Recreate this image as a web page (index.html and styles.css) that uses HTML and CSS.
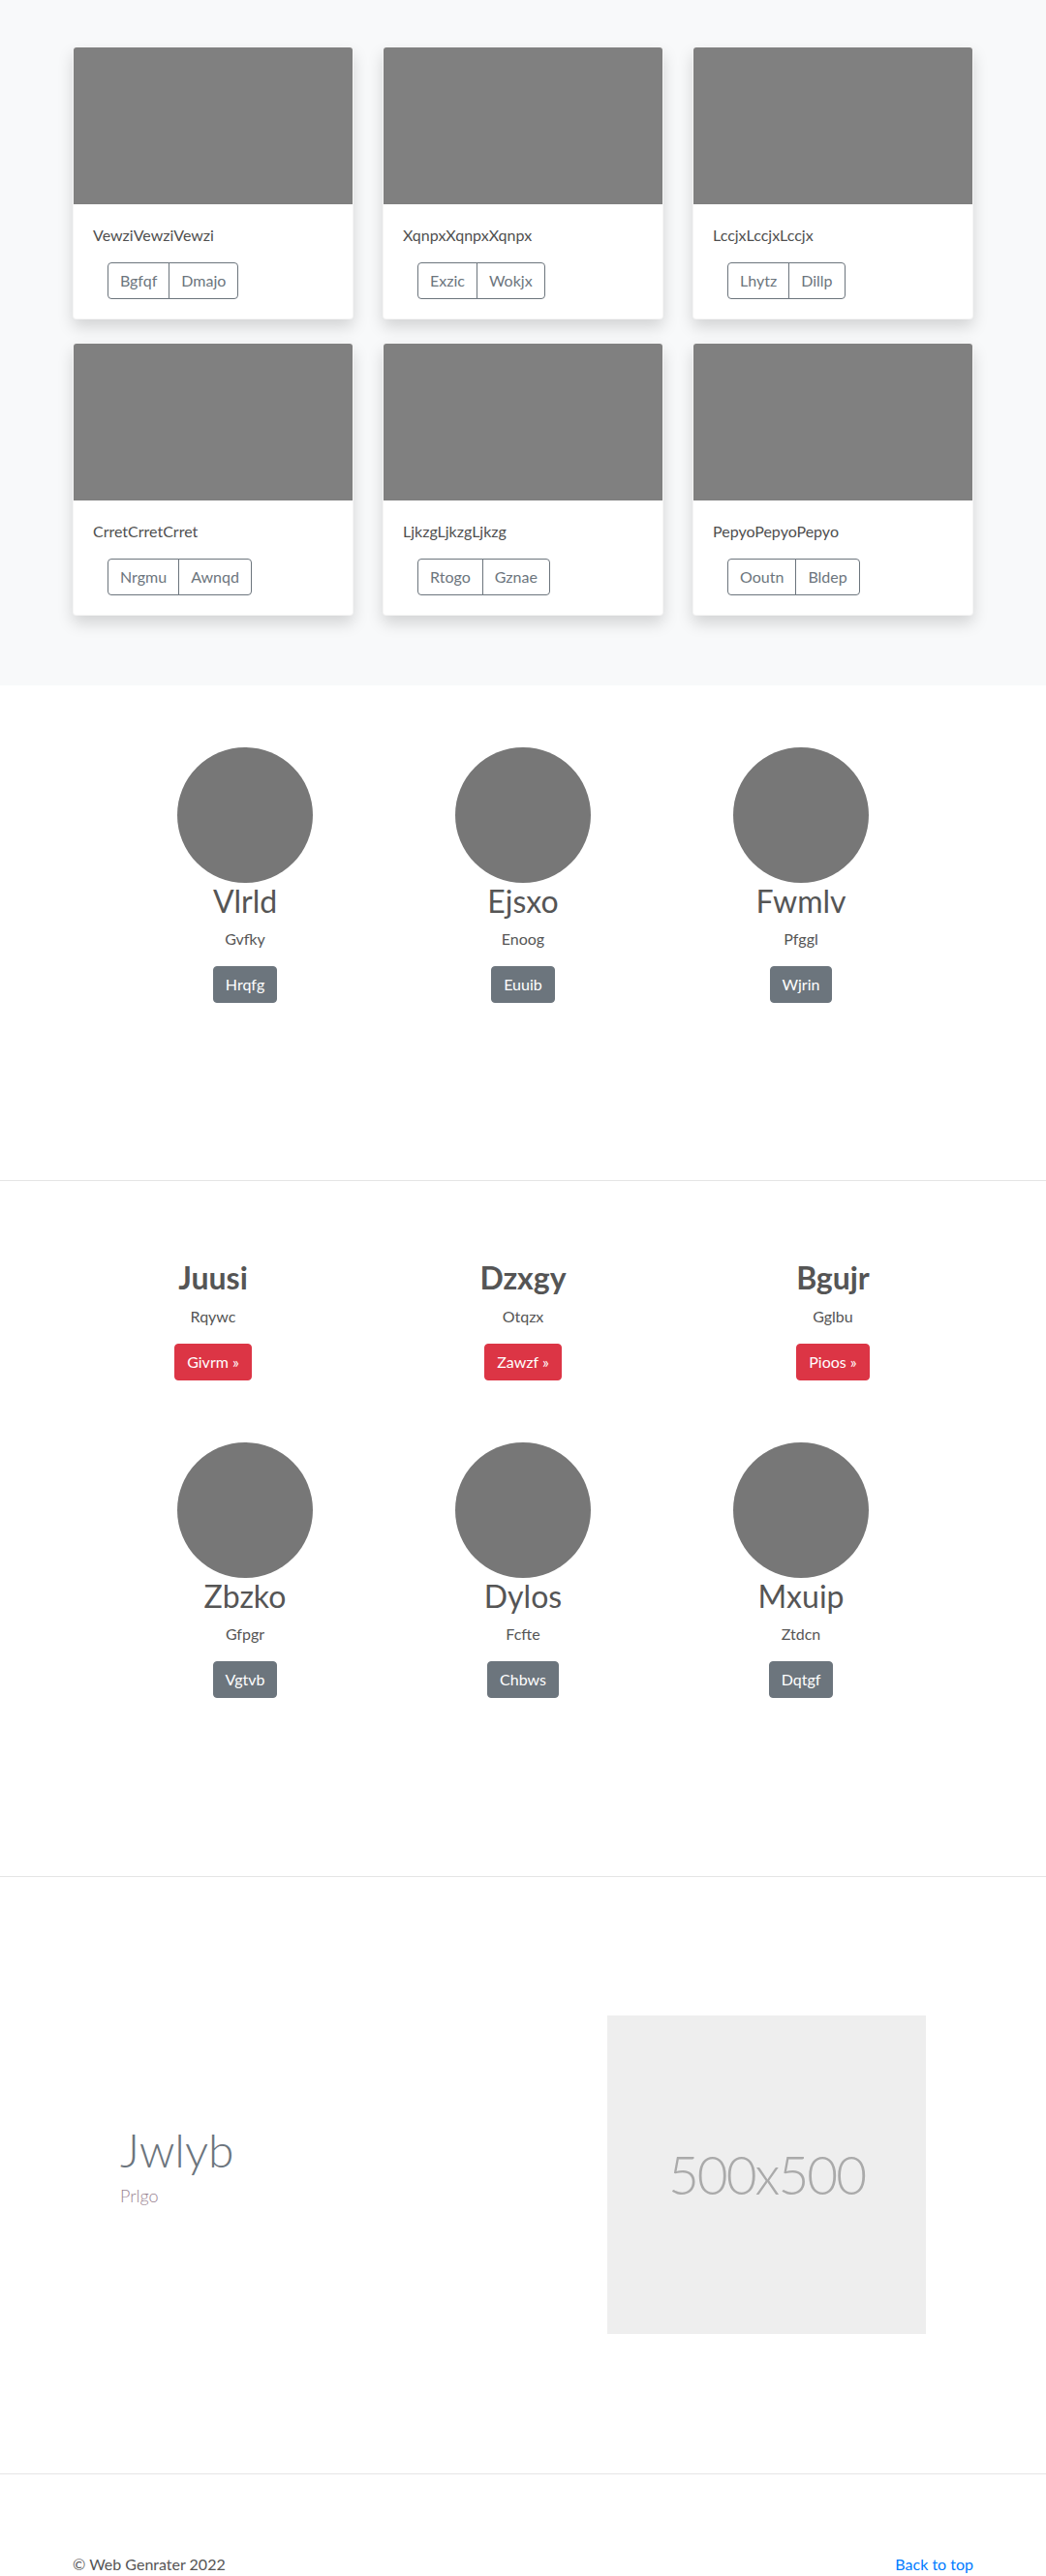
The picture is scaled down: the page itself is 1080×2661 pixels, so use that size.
FILE: index.html
```html
<!DOCTYPE html>
<html lang="en">
<head>
<meta charset="utf-8">
<title>Album</title>
<link rel="stylesheet" href="styles.css">
</head>
<body>
<main>
  <section class="album">
    <div class="container album-grid">
      <div class="card">
        <div class="card-img"></div>
        <div class="card-body">
          <p class="card-text">VewziVewziVewzi</p>
          <div class="btn-group"><a class="btn-outline">Bgfqf</a><a class="btn-outline">Dmajo</a></div>
        </div>
      </div>
      <div class="card">
        <div class="card-img"></div>
        <div class="card-body">
          <p class="card-text">XqnpxXqnpxXqnpx</p>
          <div class="btn-group"><a class="btn-outline">Exzic</a><a class="btn-outline">Wokjx</a></div>
        </div>
      </div>
      <div class="card">
        <div class="card-img"></div>
        <div class="card-body">
          <p class="card-text">LccjxLccjxLccjx</p>
          <div class="btn-group"><a class="btn-outline">Lhytz</a><a class="btn-outline">Dillp</a></div>
        </div>
      </div>
      <div class="card">
        <div class="card-img"></div>
        <div class="card-body">
          <p class="card-text">CrretCrretCrret</p>
          <div class="btn-group"><a class="btn-outline">Nrgmu</a><a class="btn-outline">Awnqd</a></div>
        </div>
      </div>
      <div class="card">
        <div class="card-img"></div>
        <div class="card-body">
          <p class="card-text">LjkzgLjkzgLjkzg</p>
          <div class="btn-group"><a class="btn-outline">Rtogo</a><a class="btn-outline">Gznae</a></div>
        </div>
      </div>
      <div class="card">
        <div class="card-img"></div>
        <div class="card-body">
          <p class="card-text">PepyoPepyoPepyo</p>
          <div class="btn-group"><a class="btn-outline">Ooutn</a><a class="btn-outline">Bldep</a></div>
        </div>
      </div>
    </div>
  </section>

  <section class="team">
    <div class="people">
      <div class="person">
        <div class="avatar"></div>
        <h2 class="person-name">Vlrld</h2>
        <p class="person-role">Gvfky</p>
        <p class="person-action"><a class="btn btn-secondary">Hrqfg</a></p>
      </div>
      <div class="person">
        <div class="avatar"></div>
        <h2 class="person-name">Ejsxo</h2>
        <p class="person-role">Enoog</p>
        <p class="person-action"><a class="btn btn-secondary">Euuib</a></p>
      </div>
      <div class="person">
        <div class="avatar"></div>
        <h2 class="person-name">Fwmlv</h2>
        <p class="person-role">Pfggl</p>
        <p class="person-action"><a class="btn btn-secondary">Wjrin</a></p>
      </div>
    </div>
  </section>

  <hr class="divider">

  <section class="features">
    <div class="feature-row">
      <div class="feature">
        <h2 class="feature-title">Juusi</h2>
        <p class="person-role">Rqywc</p>
        <p class="person-action"><a class="btn btn-danger">Givrm &raquo;</a></p>
      </div>
      <div class="feature">
        <h2 class="feature-title">Dzxgy</h2>
        <p class="person-role">Otqzx</p>
        <p class="person-action"><a class="btn btn-danger">Zawzf &raquo;</a></p>
      </div>
      <div class="feature">
        <h2 class="feature-title">Bgujr</h2>
        <p class="person-role">Gglbu</p>
        <p class="person-action"><a class="btn btn-danger">Pioos &raquo;</a></p>
      </div>
    </div>
    <div class="people people-second">
      <div class="person">
        <div class="avatar"></div>
        <h2 class="person-name">Zbzko</h2>
        <p class="person-role">Gfpgr</p>
        <p class="person-action"><a class="btn btn-secondary">Vgtvb</a></p>
      </div>
      <div class="person">
        <div class="avatar"></div>
        <h2 class="person-name">Dylos</h2>
        <p class="person-role">Fcfte</p>
        <p class="person-action"><a class="btn btn-secondary">Chbws</a></p>
      </div>
      <div class="person">
        <div class="avatar"></div>
        <h2 class="person-name">Mxuip</h2>
        <p class="person-role">Ztdcn</p>
        <p class="person-action"><a class="btn btn-secondary">Dqtgf</a></p>
      </div>
    </div>
  </section>

  <hr class="divider">

  <section class="hero">
    <div class="container hero-inner">
      <div class="hero-text">
        <h1 class="hero-title">Jwlyb</h1>
        <p class="hero-sub">Prlgo</p>
      </div>
      <div class="placeholder"><span>500x500</span></div>
    </div>
  </section>

  <hr class="divider">
</main>

<footer class="footer">
  <div class="container footer-inner">
    <p class="footer-copy">&copy; Web Genrater 2022</p>
    <p class="footer-top"><a href="#">Back to top</a></p>
  </div>
</footer>
</body>
</html>
```
FILE: styles.css
```css
* { box-sizing: border-box; }

body {
  margin: 0;
  font-family: "Lato", "Noto Sans", sans-serif;
  font-size: 16px;
  line-height: 1.5;
  color: #555;
  background: #fff;
}

p { margin: 0; }
h1, h2 { margin: 0; }

.container {
  width: 930px;
  margin: 0 auto;
}

/* ---------- Album ---------- */
.album {
  background: #f8f9fa;
  padding: 48px 0;
}

.album-grid {
  display: grid;
  grid-template-columns: repeat(3, 1fr);
  column-gap: 30px;
}

.card {
  background: #fff;
  border: 1px solid rgba(0, 0, 0, 0.04);
  border-radius: 4px;
  overflow: hidden;
  margin-bottom: 24px;
  box-shadow: 0 8px 16px rgba(0, 0, 0, 0.15);
}

.card-img {
  height: 162px;
  background: #808080;
}

.card-body {
  padding: 20px;
}

.card-text {
  margin-bottom: 16px;
  color: #4f4f4f;
}

.btn-group {
  display: inline-flex;
  margin-left: 15px;
}

.btn-outline {
  display: inline-block;
  padding: 6px 12px;
  font-size: 16px;
  line-height: 24px;
  color: #6c757d;
  border: 1px solid #6c757d;
  background: transparent;
}

.btn-outline:first-child {
  border-radius: 4px 0 0 4px;
}

.btn-outline + .btn-outline {
  margin-left: -1px;
  border-radius: 0 4px 4px 0;
}

/* ---------- People ---------- */
.team {
  padding: 64px 0 183px;
}

.people {
  width: 861px;
  margin: 0 auto;
  display: grid;
  grid-template-columns: repeat(3, 1fr);
}

.people-second {
  margin-top: 64px;
}

.person, .feature {
  text-align: center;
}

.avatar {
  width: 140px;
  height: 140px;
  border-radius: 50%;
  background: #777;
  margin: 0 auto;
}

.person-name {
  font-size: 32px;
  font-weight: 400;
  line-height: 1.2;
  margin-bottom: 8px;
  color: #555;
}

.person-role {
  margin-bottom: 16px;
}

.person-action {
  line-height: 0;
}

.btn {
  display: inline-block;
  padding: 6px 12px;
  font-size: 16px;
  line-height: 24px;
  color: #fff;
  border-radius: 4px;
  border: 1px solid transparent;
}

.btn-secondary {
  background: #6c757d;
  border-color: #6c757d;
}

.btn-danger {
  background: #dc3545;
  border-color: #dc3545;
}

.divider {
  margin: 0;
  border: 0;
  border-top: 1px solid rgba(0, 0, 0, 0.1);
}

/* ---------- Features ---------- */
.features {
  padding: 81px 0 184px;
}

.feature-row {
  width: 960px;
  margin: 0 auto;
  display: grid;
  grid-template-columns: repeat(3, 1fr);
}

.feature-title {
  font-size: 32px;
  font-weight: 700;
  line-height: 1.2;
  margin-bottom: 8px;
  color: #555;
}

/* ---------- Hero ---------- */
.hero {
  padding: 143px 0 144px;
}

.hero-inner {
  display: flex;
  align-items: center;
  justify-content: space-between;
  padding: 0 49px;
}

.hero-text {
  padding-bottom: 19px;
}

.hero-title {
  font-size: 48px;
  font-weight: 300;
  line-height: 1.2;
  color: #6c757d;
  margin-bottom: 6px;
}

.hero-sub {
  font-size: 18px;
  font-weight: 300;
  color: #9a8592;
}

.placeholder {
  width: 329px;
  height: 329px;
  background: #eee;
  display: flex;
  align-items: center;
  justify-content: center;
}

.placeholder span {
  font-size: 55px;
  font-weight: 300;
  letter-spacing: -2px;
  color: #aaa;
  line-height: 1;
}

/* ---------- Footer ---------- */
.footer {
  padding: 81px 0 48px;
}

.footer-inner {
  display: flex;
  justify-content: space-between;
}

.footer-copy {
  color: #555;
}

.footer-top a {
  color: #007bff;
  text-decoration: none;
}
```
